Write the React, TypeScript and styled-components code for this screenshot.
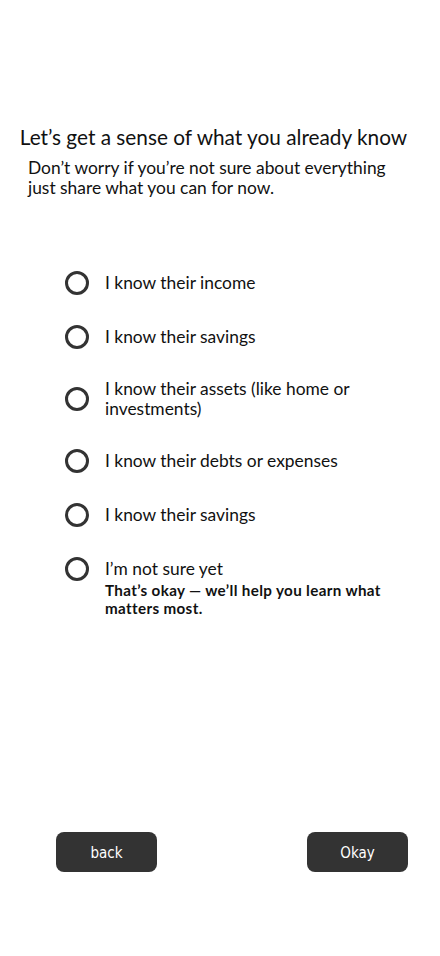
import React, { useState } from "react";
import styled, { createGlobalStyle } from "styled-components";

const GlobalStyle = createGlobalStyle`
  html, body {
    margin: 0;
    padding: 0;
    background: #ffffff;
  }
  body {
    font-family: Lato, "Noto Sans", sans-serif;
    color: #111111;
  }
`;

const Screen = styled.div`
  width: 440px;
  height: 956px;
  box-sizing: border-box;
  padding-top: 124px;
  display: flex;
  flex-direction: column;
`;

const Title = styled.h1`
  margin: 0;
  padding-right: 13px;
  font-size: 20.8px;
  font-weight: 400;
  line-height: 26px;
  text-align: center;
  color: #111111;
`;

const Subtitle = styled.p`
  margin: 8px 0 0 28px;
  font-size: 17.4px;
  line-height: 20px;
  color: #111111;
`;

const OptionList = styled.div`
  margin: 73px 0 0 65px;
  display: flex;
  flex-direction: column;
  gap: 30px;
`;

const OptionRow = styled.label`
  display: flex;
  flex-direction: column;
  cursor: pointer;
`;

const OptionMain = styled.div`
  display: flex;
  align-items: center;
  gap: 16px;
`;

const Radio = styled.span<{ $checked: boolean }>`
  flex: none;
  width: 24px;
  height: 24px;
  box-sizing: border-box;
  border: 3px solid #333333;
  border-radius: 50%;
  display: flex;
  align-items: center;
  justify-content: center;

  &::after {
    content: "";
    width: 10px;
    height: 10px;
    border-radius: 50%;
    background: #333333;
    display: ${(p) => (p.$checked ? "block" : "none")};
  }
`;

const Label = styled.span`
  width: 260px;
  font-size: 17.4px;
  line-height: 20px;
  color: #111111;
`;

const Hint = styled.span`
  margin: 0 0 0 40px;
  width: 292px;
  font-size: 15.2px;
  font-weight: 700;
  letter-spacing: 0.35px;
  line-height: 18px;
  color: #111111;
`;

const Footer = styled.div`
  margin-top: auto;
  margin-bottom: 84px;
  padding: 0 32px 0 56px;
  display: flex;
  justify-content: space-between;
`;

const Button = styled.button`
  width: 101px;
  height: 40px;
  padding-top: 2px;
  border: none;
  border-radius: 8px;
  background: #333333;
  color: #ffffff;
  font-family: "DejaVu Sans Condensed", "DejaVu Sans", sans-serif;
  font-size: 15px;
  cursor: pointer;
`;

const options = [
  { label: "I know their income" },
  { label: "I know their savings" },
  { label: "I know their assets (like home or investments)" },
  { label: "I know their debts or expenses" },
  { label: "I know their savings" },
  {
    label: "I’m not sure yet",
    hint: "That’s okay — we’ll help you learn what matters most.",
  },
];

export default function App() {
  const [selected, setSelected] = useState<number | null>(null);

  return (
    <>
      <GlobalStyle />
      <Screen>
        <Title>Let’s get a sense of what you already know</Title>
        <Subtitle>
          Don’t worry if you’re not sure about everything
          <br />
          just share what you can for now.
        </Subtitle>

        <OptionList>
          {options.map((opt, i) => (
            <OptionRow key={i} onClick={() => setSelected(i)}>
              <OptionMain>
                <Radio $checked={selected === i} />
                <Label>{opt.label}</Label>
              </OptionMain>
              {opt.hint ? <Hint>{opt.hint}</Hint> : null}
            </OptionRow>
          ))}
        </OptionList>

        <Footer>
          <Button>back</Button>
          <Button>Okay</Button>
        </Footer>
      </Screen>
    </>
  );
}
